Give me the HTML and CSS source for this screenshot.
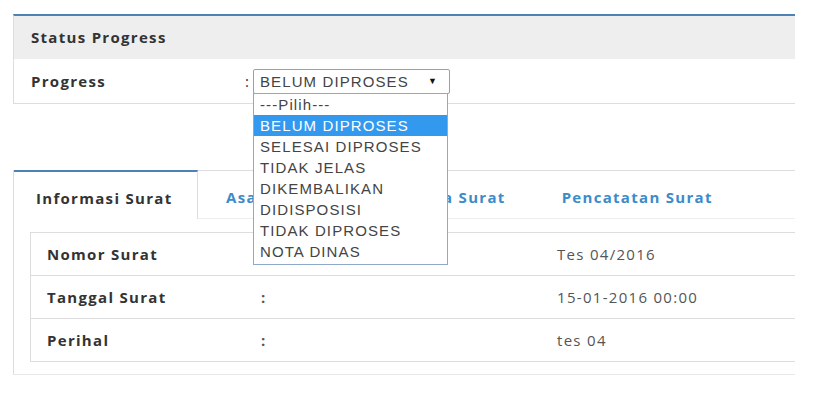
FILE: index.html
```html
<!DOCTYPE html>
<html lang="id">
<head>
  <meta charset="UTF-8" />
  <title>Status Progress</title>
  <link rel="stylesheet" href="styles.css">
</head>
<body>
  <div class="page">
    <div class="panel">
      <div class="panel-heading">Status Progress</div>
      <div class="panel-body">
        <span class="field-label">Progress</span>
        <span class="colon">:</span>
        <div class="select-wrap">
          <div class="select-box">
            <span>BELUM DIPROSES</span>
            <span class="caret">&#9660;</span>
          </div>
          <ul class="options">
            <li>---Pilih---</li>
            <li class="active">BELUM DIPROSES</li>
            <li>SELESAI DIPROSES</li>
            <li>TIDAK JELAS</li>
            <li>DIKEMBALIKAN</li>
            <li>DIDISPOSISI</li>
            <li>TIDAK DIPROSES</li>
            <li>NOTA DINAS</li>
          </ul>
        </div>
      </div>
    </div>

    <div class="tab-panel">
      <div class="tabs">
        <div class="tab current">Informasi Surat</div>
        <div class="tab">Asal Surat</div>
        <div class="tab">Penerima Surat</div>
        <div class="tab">Pencatatan Surat</div>
        <div class="tab-fill"></div>
      </div>
      <div class="tab-content">
        <table class="info">
          <tr>
            <th>Nomor Surat</th>
            <td class="sep">:</td>
            <td>Tes 04/2016</td>
          </tr>
          <tr>
            <th>Tanggal Surat</th>
            <td class="sep">:</td>
            <td>15-01-2016 00:00</td>
          </tr>
          <tr>
            <th>Perihal</th>
            <td class="sep">:</td>
            <td>tes 04</td>
          </tr>
        </table>
      </div>
    </div>
  </div>
</body>
</html>
```

FILE: styles.css
```css
body {
  margin: 0;
  background: #fff;
  font-family: "Open Sans", sans-serif;
  letter-spacing: 1.3px;
  color: #333;
}
.page {
  padding: 14px 18px 0 13px;
}
.panel {
  border-top: 2px solid #4d82b5;
  border-left: 1px solid #ddd;
  border-bottom: 1px solid #ddd;
}
.panel-heading {
  background: #eeeeee;
  height: 43px;
  line-height: 43px;
  padding-left: 17px;
  font-size: 15px;
  font-weight: bold;
}
.panel-body {
  display: flex;
  align-items: center;
  height: 44px;
  padding-left: 17px;
  font-size: 15px;
}
.field-label {
  font-weight: bold;
  width: 214px;
}
.colon {
  width: 8px;
  letter-spacing: 0;
}
.select-wrap {
  position: relative;
}
.select-box {
  display: flex;
  align-items: center;
  justify-content: space-between;
  width: 183px;
  height: 23px;
  padding: 0 6px;
  border: 1px solid #7fa6d0;
  border-radius: 2px;
  font-family: "Liberation Sans", Arial, sans-serif;
  font-size: 15px;
  letter-spacing: 1.1px;
  color: #444;
}
.caret {
  font-size: 9px;
  color: #111;
  margin-right: 5px;
}
.options {
  position: absolute;
  top: 24px;
  left: 0;
  width: 193px;
  margin: 0;
  padding: 0 0 2px;
  list-style: none;
  background: #fff;
  border: 1px solid #8fa9c8;
  font-family: "Liberation Sans", Arial, sans-serif;
  font-size: 15px;
  letter-spacing: 1.1px;
  color: #444;
  z-index: 10;
}
.options li {
  height: 21px;
  line-height: 21px;
  padding-left: 6px;
}
.options li.active {
  background: #3399ee;
  color: #fff;
}
.tab-panel {
  margin-top: 66px;
  border-left: 1px solid #ddd;
  border-bottom: 1px solid #e8e8e8;
  padding-bottom: 12px;
}
.tabs {
  display: flex;
  height: 49px;
  font-size: 15px;
  font-weight: bold;
}
.tab {
  display: flex;
  align-items: center;
  padding: 4px 28px 0;
  border-top: 1px solid #ddd;
  border-bottom: 1px solid #eee;
  color: #3d8bc9;
}
.tab.current {
  width: 184px;
  box-sizing: border-box;
  padding: 4px 22px 0;
  border-top: 2px solid #4d82b5;
  border-bottom: none;
  border-right: 1px solid #ddd;
  color: #333;
}
.tab-fill {
  flex: 1;
  border-top: 1px solid #ddd;
  border-bottom: 1px solid #eee;
}
.tab-content {
  padding: 13px 0 0 16px;
}
.info {
  width: 100%;
  border-collapse: collapse;
  border: 1px solid #ddd;
  border-right: none;
  font-size: 15px;
}
.info tr {
  height: 43px;
  border-bottom: 1px solid #ddd;
}
.info th {
  text-align: left;
  width: 212px;
  padding-left: 16px;
}
.info td.sep {
  width: 294px;
  font-weight: bold;
}
.info td {
  color: #555;
}
```
